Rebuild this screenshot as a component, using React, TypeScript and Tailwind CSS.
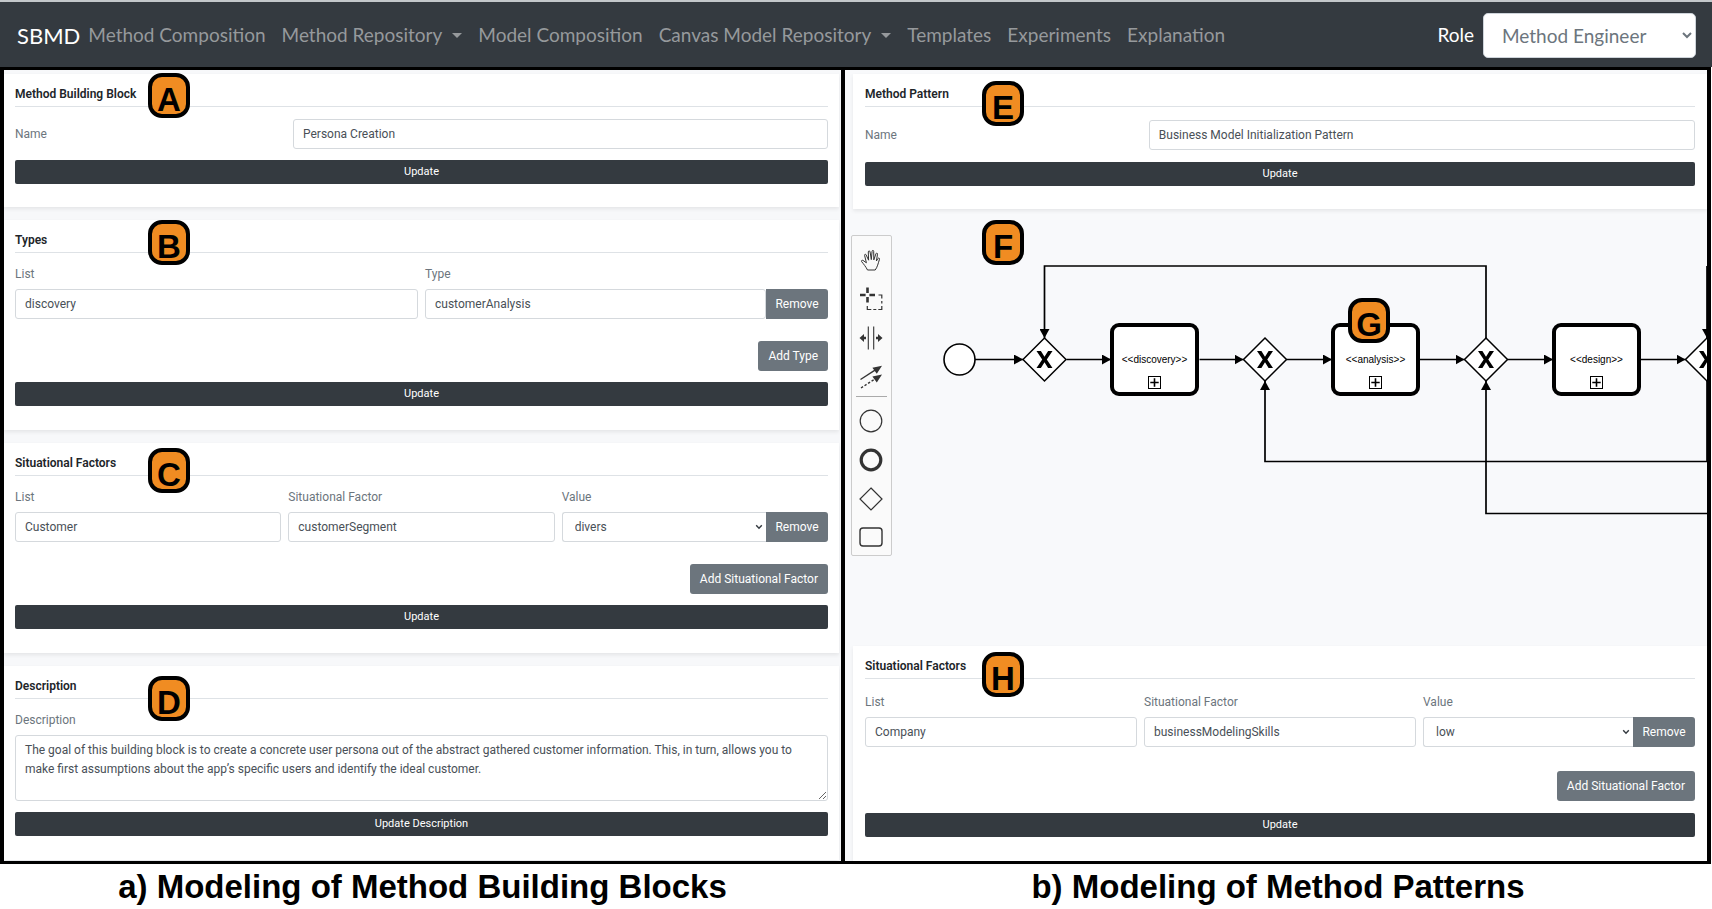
import { useId, type ReactNode } from "react";

const fieldClass =
  "h-[30px] w-full min-w-0 rounded-[3px] border border-[#d5d9dd] bg-white px-[9px] text-[12px] text-[#495057] outline-none";

function Badge({ letter, place }: { letter: string; place: string }) {
  return (
    <span
      className={`absolute z-10 flex h-[45px] w-[42px] items-center justify-center rounded-[14px] border-4 border-black bg-[#f08c22] pt-[7px] font-['Liberation_Sans',Arial,sans-serif] text-[33px] leading-none font-bold text-black ${place}`}
    >
      {letter}
    </span>
  );
}

function Card({
  title,
  letter,
  badgePlace,
  className,
  children,
}: {
  title: string;
  letter: string;
  badgePlace: string;
  className: string;
  children: ReactNode;
}) {
  return (
    <section className={`relative bg-white shadow-[0_2px_4px_rgba(0,0,0,0.08)] ${className}`}>
      <h2 className="flex h-[33px] items-center border-b border-[#dee2e6] pt-[7px] text-[12px] font-semibold text-[#212529]">
        {title}
      </h2>
      <Badge letter={letter} place={badgePlace} />
      {children}
    </section>
  );
}

function UpdateButton({ children }: { children: ReactNode }) {
  return (
    <button
      type="button"
      className="flex h-6 w-full items-center justify-center rounded-[2px] bg-[#343a40] text-[11px] text-white"
    >
      {children}
    </button>
  );
}

function NameRow({ value, className }: { value: string; className: string }) {
  const id = useId();
  return (
    <div className={`grid grid-cols-[278fr_535fr] items-center ${className}`}>
      <label htmlFor={id} className="text-[12px] text-[#6c757d]">
        Name
      </label>
      <input id={id} type="text" defaultValue={value} className={fieldClass} />
    </div>
  );
}

function Field({ label, children }: { label: string; children: (id: string) => ReactNode }) {
  const id = useId();
  return (
    <div className="min-w-0">
      <label htmlFor={id} className="mb-[7px] block text-[12px] leading-4 text-[#6c757d]">
        {label}
      </label>
      <div className="flex">{children(id)}</div>
    </div>
  );
}

function TextField({ label, value }: { label: string; value: string }) {
  return (
    <Field label={label}>
      {(id) => <input id={id} type="text" defaultValue={value} className={fieldClass} />}
    </Field>
  );
}

function RemoveButton() {
  return (
    <button
      type="button"
      className="h-[30px] w-[62px] shrink-0 rounded-r-[3px] bg-[#6c757d] text-[12px] text-white"
    >
      Remove
    </button>
  );
}

function AddButton({ className, children }: { className: string; children: ReactNode }) {
  return (
    <div className={`flex justify-end ${className}`}>
      <button type="button" className="h-[30px] rounded-[3px] bg-[#6c757d] px-[10px] text-[12px] text-white">
        {children}
      </button>
    </div>
  );
}

function Factors({
  list,
  factor,
  value,
  rowClass,
  addClass,
}: {
  list: string;
  factor: string;
  value: string;
  rowClass: string;
  addClass: string;
}) {
  return (
    <>
      <div className={`grid grid-cols-3 gap-[7px] ${rowClass}`}>
        <TextField label="List" value={list} />
        <TextField label="Situational Factor" value={factor} />
        <Field label="Value">
          {(id) => (
            <>
              <div className="relative min-w-0 flex-1">
                <select
                  id={id}
                  defaultValue={value}
                  className="h-[30px] w-full appearance-none rounded-l-[3px] border border-r-0 border-[#d5d9dd] bg-white px-3 text-[12px] text-[#495057] outline-none"
                >
                  <option>{value}</option>
                </select>
                <svg
                  className="pointer-events-none absolute top-3 right-[3px] h-[6px] w-2"
                  viewBox="0 0 8 6"
                  fill="none"
                  stroke="#343a40"
                  strokeWidth="1.4"
                >
                  <path d="M1.2 1.2l2.8 3 2.8-3" />
                </svg>
              </div>
              <RemoveButton />
            </>
          )}
        </Field>
      </div>
      <AddButton className={addClass}>Add Situational Factor</AddButton>
      <UpdateButton>Update</UpdateButton>
    </>
  );
}

function Caret() {
  return <span className="ml-[10px] border-x-[5px] border-t-[5px] border-x-transparent border-t-current" />;
}

const navItems = [
  { label: "Method Composition", menu: false },
  { label: "Method Repository", menu: true },
  { label: "Model Composition", menu: false },
  { label: "Canvas Model Repository", menu: true },
  { label: "Templates", menu: false },
  { label: "Experiments", menu: false },
  { label: "Explanation", menu: false },
];

function Header() {
  return (
    <header className="flex h-[67px] items-center border-t-2 border-[#c3c7ca] bg-[#343a40] pt-[2px] pr-4 pl-[17px] font-[Lato,'Open_Sans',sans-serif]">
      <a href="#" className="mr-2 text-[22px] text-white">
        SBMD
      </a>
      <nav className="flex items-center gap-4 text-[19px] whitespace-nowrap text-[#96999c]">
        {navItems.map((item) => (
          <a key={item.label} href="#" className="flex items-center">
            {item.label}
            {item.menu && <Caret />}
          </a>
        ))}
      </nav>
      <label htmlFor="role" className="mr-[9px] ml-auto text-[19px] text-white">
        Role
      </label>
      <select
        id="role"
        defaultValue="Method Engineer"
        className="h-[45px] w-[213px] rounded-[5px] border border-[#ced4da] bg-white pl-[14px] text-[19px] text-[#6c757d]"
      >
        <option>Method Engineer</option>
      </select>
    </header>
  );
}

const tools: { name: string; icon: ReactNode }[] = [
  {
    name: "Hand tool",
    icon: (
      <path
        d="M9.5 23 C8 20 5.5 16.8 3.6 14.6 C3 13.7 4 12.9 5 13.4 L8.4 15.8 L6.6 8.4 C6.4 7.1 7.7 6.8 8.2 8 L10.6 13.2 L10.3 5 C10.3 3.6 11.8 3.5 12.1 4.9 L13.3 12.6 L14.1 4.2 C14.3 3 15.7 3.1 15.7 4.4 L15.8 12.9 L17.9 6.8 C18.4 5.6 19.7 6 19.5 7.2 L18.4 14 L19.9 11.6 C20.6 10.6 21.8 11 21.5 12.2 C20.2 16.3 19.3 20.4 17.2 23 Z"
        strokeWidth="1"
      />
    ),
  },
  {
    name: "Lasso tool",
    icon: (
      <>
        <path d="M9.5 1.5v5.6M9.5 11v5.6M2 9h5.6M11.4 9h5.6" strokeWidth="2.6" />
        <path d="M20.5 9h3.3v3.5M23.8 15v2.5M23.8 20v3.5h-3.5M18.3 23.5h-3M13.3 23.5h-4v-3.4" strokeWidth="1.2" />
      </>
    ),
  },
  {
    name: "Space tool",
    icon: (
      <>
        <path d="M10.3 1.5v23M15.7 1.5v23" strokeWidth="1.1" />
        <path d="M4.5 13H8M18 13h3.5" strokeWidth="2.4" />
        <path d="M1.5 13l4.5-4v8ZM24.5 13l-4.5-4v8Z" fill="#333" stroke="none" />
      </>
    ),
  },
  {
    name: "Connect tool",
    icon: (
      <>
        <path d="M2.5 15.5L17 6.2" strokeWidth="1.4" />
        <path d="M3 24L17 15" strokeWidth="1.4" strokeDasharray="2.4 1.8" />
        <path d="M24 1.8l-9.6 2 4.4 6ZM24 10.6l-9.6 2 4.4 6Z" fill="#333" stroke="none" />
      </>
    ),
  },
  { name: "Create start event", icon: <circle cx="13" cy="13" r="10.8" strokeWidth="1.2" /> },
  { name: "Create end event", icon: <circle cx="13" cy="13" r="9.8" strokeWidth="3.2" /> },
  { name: "Create gateway", icon: <path d="M13 2L24 13 13 24 2 13Z" strokeWidth="1.2" /> },
  { name: "Create task", icon: <rect x="2" y="4" width="22" height="18" rx="3" strokeWidth="1.4" /> },
];

function Palette() {
  return (
    <div className="absolute top-[26px] left-[6px] flex w-[41px] flex-col items-center rounded-[2px] border border-[#ccc] bg-[#fafafa] pt-1 pr-px">
      {tools.map((tool, i) => (
        <div key={tool.name} className="group flex w-full flex-col items-center">
          {i === 4 && <hr className="mb-1 w-[31px] border-[#aaa]" />}
          <button
            type="button"
            aria-label={tool.name}
            className="flex h-[39px] w-full items-center justify-center group-last:h-[37px]"
          >
            <svg width="26" height="26" viewBox="0 0 26 26" fill="none" stroke="#333">
              {tool.icon}
            </svg>
          </button>
        </div>
      ))}
    </div>
  );
}

function Gateway({ x }: { x: number }) {
  return (
    <g transform={`translate(${x} 150.5)`}>
      <path d="M0 -21.5L21.5 0 0 21.5 -21.5 0Z" fill="#fff" stroke="#000" strokeWidth="1.5" />
      <path d="M-8 -8.5h4.4L0 -2.7 3.6 -8.5H8L2.3 0 8 8.5H3.6L0 2.7 -3.6 8.5H-8L-2.3 0Z" fill="#000" />
    </g>
  );
}

function Task({ x, label }: { x: number; label: string }) {
  return (
    <g transform={`translate(${x} 150.5)`}>
      <rect x="-42.5" y="-34.5" width="85" height="69" rx="7" fill="#fff" stroke="#000" strokeWidth="4" />
      <text x="0" y="3" textAnchor="middle" className="fill-black font-['Liberation_Sans',Arial,sans-serif] text-[10px]">
        {label}
      </text>
      <rect x="-6" y="17" width="12" height="12" fill="#fff" stroke="#000" />
      <path d="M0 18.8v8.4M-4.2 23h8.4" stroke="#000" strokeWidth="1.6" />
    </g>
  );
}

const flows = [
  "M130 150.5H178",
  "M221.5 150.5H266",
  "M354.5 150.5H398.5",
  "M441.5 150.5H487",
  "M575 150.5H619.5",
  "M662.5 150.5H708",
  "M796 150.5H840.5",
  "M641 129V57H199.5V129",
  "M862 252.5H420V172",
  "M862 304.5H641V172",
  "M862 57V129",
];

function Diagram() {
  return (
    <div className="relative min-h-[437px] flex-1 overflow-hidden">
      <svg width="862" height="437" viewBox="0 0 862 437" role="img" aria-label="Business model initialization process">
        <defs>
          <marker id="arrow" viewBox="0 0 9 10" refX="9" refY="5" markerWidth="9" markerHeight="10" markerUnits="userSpaceOnUse" orient="auto">
            <path d="M0 0L9 5 0 10Z" />
          </marker>
        </defs>
        <g fill="none" stroke="#000" strokeWidth="1.7">
          {flows.map((d) => (
            <path key={d} d={d} markerEnd="url(#arrow)" />
          ))}
          <path d="M862 172V252.5" />
        </g>
        <circle cx="114.5" cy="150.5" r="15.5" fill="#fff" stroke="#000" strokeWidth="1.6" />
        <Gateway x={199.5} />
        <Gateway x={420} />
        <Gateway x={641} />
        <Gateway x={862} />
        <Task x={309.5} label="<<discovery>>" />
        <Task x={530.5} label="<<analysis>>" />
        <Task x={751.5} label="<<design>>" />
      </svg>
      <Palette />
      <Badge letter="F" place="left-[137px] top-[11px]" />
      <Badge letter="G" place="left-[503px] top-[89px]" />
    </div>
  );
}

export default function App() {
  return (
    <div className="bg-white font-[Roboto,'Open_Sans',sans-serif]">
      <Header />
      <main className="mr-px grid grid-cols-[841fr_862fr] border-x-4 border-y-[3px] border-black">
        <div className="flex min-w-0 flex-col gap-[13px] border-r-4 border-black bg-[#f7f8fa] pt-1 pr-[2px]">
          <Card title="Method Building Block" letter="A" badgePlace="left-36 -top-px" className="px-[11px] pb-[23px]">
            <NameRow value="Persona Creation" className="mt-3 mb-[11px]" />
            <UpdateButton>Update</UpdateButton>
          </Card>
          <Card title="Types" letter="B" badgePlace="left-36 top-0" className="px-[11px] pb-6">
            <div className="mt-[13px] grid grid-cols-2 gap-[7px]">
              <TextField label="List" value="discovery" />
              <Field label="Type">
                {(id) => (
                  <>
                    <input id={id} type="text" defaultValue="customerAnalysis" className={fieldClass} />
                    <RemoveButton />
                  </>
                )}
              </Field>
            </div>
            <AddButton className="mt-[22px] mb-[11px]">Add Type</AddButton>
            <UpdateButton>Update</UpdateButton>
          </Card>
          <Card title="Situational Factors" letter="C" badgePlace="left-36 top-[5px]" className="px-[11px] pb-6">
            <Factors
              list="Customer"
              factor="customerSegment"
              value="divers"
              rowClass="mt-[13px]"
              addClass="mt-[22px] mb-[11px]"
            />
          </Card>
          <Card title="Description" letter="D" badgePlace="left-36 top-[10px]" className="px-[11px] pb-6">
            <div className="mt-[13px] mb-[11px]">
              <Field label="Description">
                {(id) => (
                  <textarea
                    id={id}
                    defaultValue="The goal of this building block is to create a concrete user persona out of the abstract gathered customer information. This, in turn, allows you to make first assumptions about the app’s specific users and identify the ideal customer."
                    className="block h-[66px] w-full rounded-[3px] border border-[#d5d9dd] bg-white px-[9px] py-[5px] text-[12px] leading-[19px] text-[#495057] outline-none"
                  />
                )}
              </Field>
            </div>
            <UpdateButton>Update Description</UpdateButton>
          </Card>
        </div>
        <div className="flex min-w-0 flex-col bg-[#f8f9fb] pt-1">
          <Card title="Method Pattern" letter="E" badgePlace="left-[129px] top-[7px]" className="ml-2 px-3 pb-[23px]">
            <NameRow value="Business Model Initialization Pattern" className="mt-[13px] mb-3" />
            <UpdateButton>Update</UpdateButton>
          </Card>
          <Diagram />
          <Card title="Situational Factors" letter="H" badgePlace="left-[129px] top-[6px]" className="ml-2 px-3 pb-6">
            <Factors
              list="Company"
              factor="businessModelingSkills"
              value="low"
              rowClass="mt-[15px]"
              addClass="mt-6 mb-3"
            />
          </Card>
        </div>
      </main>
      <footer className="mr-px grid grid-cols-[845fr_866fr] pt-1 text-center font-['Liberation_Sans',Arial,sans-serif] text-[33px] leading-[38px] font-bold text-black">
        <p>a) Modeling of Method Building Blocks</p>
        <p>b) Modeling of Method Patterns</p>
      </footer>
    </div>
  );
}
